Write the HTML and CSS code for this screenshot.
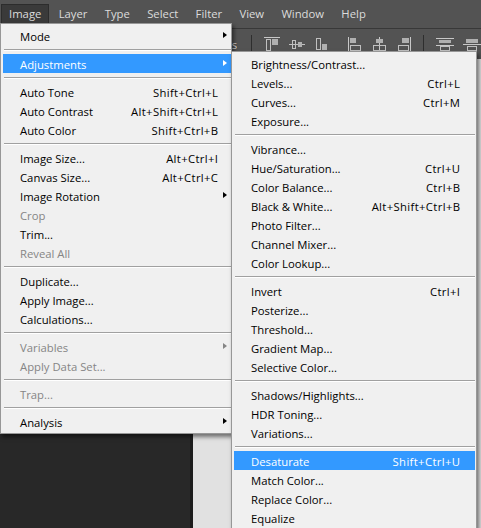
FILE: index.html
```html
<!DOCTYPE html>
<html>
<head>
<meta charset="utf-8">
<link rel="stylesheet" href="styles.css">
</head>
<body>
<div class="app">
  <nav class="menubar">
    <span class="mb-item active">Image</span>
    <span class="mb-item">Layer</span>
    <span class="mb-item">Type</span>
    <span class="mb-item">Select</span>
    <span class="mb-item">Filter</span>
    <span class="mb-item">View</span>
    <span class="mb-item">Window</span>
    <span class="mb-item">Help</span>
  </nav>
  <div class="optbar">
    <div class="opt-label">Show Transform Controls</div>
    <div class="vsep"></div>
    <div class="icons">
      <svg class="ico" width="16" height="15" viewBox="0 0 16 15"><rect x="0" y="0" width="16" height="1" fill="#c8c8c8"/><rect x="2.5" y="2.5" width="4" height="11" fill="none" stroke="#c0c0c0"/><rect x="8" y="2" width="6" height="6" fill="#b0b0b0"/></svg>
      <svg class="ico" width="16" height="15" viewBox="0 0 16 15"><rect x="0" y="7" width="16" height="1" fill="#c0c0c0"/><rect x="3.5" y="3.5" width="3" height="8" fill="none" stroke="#c0c0c0"/><rect x="9" y="5" width="4" height="5" fill="#b0b0b0"/></svg>
      <svg class="ico" width="16" height="15" viewBox="0 0 16 15"><rect x="0" y="14" width="16" height="1" fill="#c8c8c8"/><rect x="2.5" y="1.5" width="4" height="11" fill="none" stroke="#c0c0c0"/><rect x="8" y="7" width="5" height="6" fill="#b0b0b0"/></svg>
      <svg class="ico gap" width="15" height="15" viewBox="0 0 15 15"><rect x="0" y="0" width="1" height="15" fill="#c8c8c8"/><rect x="2" y="1" width="6" height="5" fill="#b0b0b0"/><rect x="2.5" y="8.5" width="10" height="5" fill="none" stroke="#c0c0c0"/></svg>
      <svg class="ico" width="15" height="15" viewBox="0 0 15 15"><rect x="7" y="0" width="1" height="15" fill="#c8c8c8"/><rect x="4" y="2" width="7" height="4" fill="#b0b0b0"/><rect x="1.5" y="8.5" width="12" height="5" fill="none" stroke="#c0c0c0"/></svg>
      <svg class="ico" width="15" height="15" viewBox="0 0 15 15"><rect x="14" y="0" width="1" height="15" fill="#c8c8c8"/><rect x="6" y="1" width="7" height="5" fill="#b0b0b0"/><rect x="2.5" y="8.5" width="10" height="5" fill="none" stroke="#c0c0c0"/></svg>
    </div>
    <div class="vsep vsep2"></div>
    <div class="icons">
      <svg class="ico" width="18" height="15" viewBox="0 0 18 15"><rect x="0" y="1" width="18" height="1" fill="#c8c8c8"/><rect x="3" y="3" width="12" height="3" fill="#b0b0b0"/><rect x="0" y="8" width="18" height="1" fill="#c8c8c8"/><rect x="4.5" y="9.5" width="9" height="4" fill="none" stroke="#c0c0c0"/></svg>
      <svg class="ico" width="18" height="15" viewBox="0 0 18 15"><rect x="0" y="7" width="18" height="1" fill="#c8c8c8"/><rect x="3" y="2" width="12" height="4" fill="#b0b0b0"/><rect x="4.5" y="9.5" width="9" height="4" fill="none" stroke="#c0c0c0"/></svg>
    </div>
  </div>
  <div class="workspace">
    <div class="pasteboard"></div>
    <div class="canvas-edge"></div>
    <div class="canvas"></div>
  </div>
</div>

<div class="menu menu-image">
  <div class="item"><span class="label">Mode</span><span class="tail"><i class="arrow"></i></span></div>
  <div class="sep"></div>
  <div class="item sel"><span class="label">Adjustments</span><span class="tail"><i class="arrow"></i></span></div>
  <div class="sep"></div>
  <div class="item"><span class="label">Auto Tone</span><span class="key">Shift+Ctrl+L</span><span class="tail"></span></div>
  <div class="item"><span class="label">Auto Contrast</span><span class="key">Alt+Shift+Ctrl+L</span><span class="tail"></span></div>
  <div class="item"><span class="label">Auto Color</span><span class="key">Shift+Ctrl+B</span><span class="tail"></span></div>
  <div class="sep"></div>
  <div class="item"><span class="label">Image Size...</span><span class="key">Alt+Ctrl+I</span><span class="tail"></span></div>
  <div class="item"><span class="label">Canvas Size...</span><span class="key">Alt+Ctrl+C</span><span class="tail"></span></div>
  <div class="item"><span class="label">Image Rotation</span><span class="tail"><i class="arrow"></i></span></div>
  <div class="item dis"><span class="label">Crop</span><span class="tail"></span></div>
  <div class="item"><span class="label">Trim...</span><span class="tail"></span></div>
  <div class="item dis"><span class="label">Reveal All</span><span class="tail"></span></div>
  <div class="sep"></div>
  <div class="item"><span class="label">Duplicate...</span><span class="tail"></span></div>
  <div class="item"><span class="label">Apply Image...</span><span class="tail"></span></div>
  <div class="item"><span class="label">Calculations...</span><span class="tail"></span></div>
  <div class="sep"></div>
  <div class="item dis"><span class="label">Variables</span><span class="tail"><i class="arrow"></i></span></div>
  <div class="item dis"><span class="label">Apply Data Set...</span><span class="tail"></span></div>
  <div class="sep"></div>
  <div class="item dis"><span class="label">Trap...</span><span class="tail"></span></div>
  <div class="sep"></div>
  <div class="item"><span class="label">Analysis</span><span class="tail"><i class="arrow"></i></span></div>
</div>

<div class="menu menu-adjust">
  <div class="item"><span class="label">Brightness/Contrast...</span></div>
  <div class="item"><span class="label">Levels...</span><span class="key">Ctrl+L</span></div>
  <div class="item"><span class="label">Curves...</span><span class="key">Ctrl+M</span></div>
  <div class="item"><span class="label">Exposure...</span></div>
  <div class="sep"></div>
  <div class="item"><span class="label">Vibrance...</span></div>
  <div class="item"><span class="label">Hue/Saturation...</span><span class="key">Ctrl+U</span></div>
  <div class="item"><span class="label">Color Balance...</span><span class="key">Ctrl+B</span></div>
  <div class="item"><span class="label">Black &amp; White...</span><span class="key">Alt+Shift+Ctrl+B</span></div>
  <div class="item"><span class="label">Photo Filter...</span></div>
  <div class="item"><span class="label">Channel Mixer...</span></div>
  <div class="item"><span class="label">Color Lookup...</span></div>
  <div class="sep"></div>
  <div class="item"><span class="label">Invert</span><span class="key">Ctrl+I</span></div>
  <div class="item"><span class="label">Posterize...</span></div>
  <div class="item"><span class="label">Threshold...</span></div>
  <div class="item"><span class="label">Gradient Map...</span></div>
  <div class="item"><span class="label">Selective Color...</span></div>
  <div class="sep"></div>
  <div class="item"><span class="label">Shadows/Highlights...</span></div>
  <div class="item"><span class="label">HDR Toning...</span></div>
  <div class="item"><span class="label">Variations...</span></div>
  <div class="sep"></div>
  <div class="item sel"><span class="label">Desaturate</span><span class="key">Shift+Ctrl+U</span></div>
  <div class="item"><span class="label">Match Color...</span></div>
  <div class="item"><span class="label">Replace Color...</span></div>
  <div class="item"><span class="label">Equalize</span></div>
</div>
</body>
</html>
```

FILE: styles.css
```css
* { box-sizing: border-box; }
html, body { margin: 0; padding: 0; }
body {
  width: 481px;
  height: 528px;
  overflow: hidden;
  position: relative;
  background: #282828;
  font-family: "Open Sans", "Noto Sans", sans-serif;
  font-size: 11.3px;
}
.app { display: flex; flex-direction: column; height: 528px; }

.menubar {
  height: 29px;
  background: #535353;
  border-bottom: 1px solid #383838;
  display: flex;
  align-items: flex-start;
  padding: 4px 0 0 1px;
  flex: none;
}
.mb-item {
  height: 20px;
  line-height: 18px;
  padding: 0 7.65px;
  border: 1px solid transparent;
  color: #dcdcdc;
  white-space: nowrap;
}
.mb-item.active { background: #3a3a3a; border-color: #2c2c2c; padding: 0 7px 0 7px; margin-right: 0.65px; }

.optbar {
  height: 30px;
  flex: none;
  background: #535353;
  display: flex;
  align-items: center;
}
.opt-label {
  width: 251px;
  text-align: right;
  color: #dcdcdc;
  white-space: nowrap;
  overflow: hidden;
}
.vsep { width: 1px; height: 18px; background: #2e2e2e; margin-left: 14px; }
.vsep2 { margin-left: 12px; }
.icons { display: flex; align-items: center; gap: 9px; margin-left: 12px; }
.ico { display: block; flex: none; }
.ico.gap { margin-left: 9px; }

.workspace { flex: 1; display: flex; }
.pasteboard { width: 190px; background: #282828; }
.canvas-edge { width: 3px; background: #1c1c1c; }
.canvas { flex: 1; background: #e1e1e1; }

.menu {
  position: absolute;
  background: #f0f0f0;
  border: 1px solid #979797;
  box-shadow: 2px 3px 4px rgba(0, 0, 0, 0.5);
  color: #000;
}
.menu-image { left: 0; top: 23px; width: 232px; padding: 2px 0 2px 2px; }
.menu-adjust { left: 231px; top: 51px; width: 246px; padding: 2px 1px 2px 2px; }

.item {
  display: flex;
  align-items: center;
  height: 19px;
  line-height: 17px;
  padding-top: 2px;
  padding-left: 17px;
  white-space: nowrap;
}
.menu-adjust .item { padding-right: 15px; }
.item .label { flex: 1; }
.item .key { letter-spacing: 0.35px; margin-right: -0.35px; }
.item .tail {
  width: 13px;
  height: 17px;
  display: flex;
  align-items: center;
  justify-content: center;
  padding-bottom: 3px;
}
.item.sel { background: #3399ff; color: #fff; }
.item.dis { color: #858585; }

.arrow {
  display: block;
  width: 0;
  height: 0;
  border-left: 4px solid #000;
  border-top: 3.5px solid transparent;
  border-bottom: 3.5px solid transparent;
}
.item.sel .arrow { border-left-color: #fff; }
.item.dis .arrow { border-left-color: #858585; }

.sep { height: 9px; padding-top: 4px; margin-left: 1px; }
.sep::before {
  content: "";
  display: block;
  border-top: 1px solid #a0a0a0;
  border-bottom: 1px solid #fff;
}
```
